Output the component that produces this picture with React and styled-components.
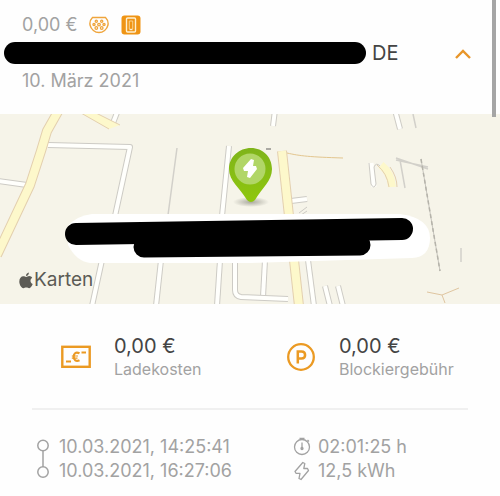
import styled, { createGlobalStyle } from "styled-components";

const TIMES = ["10.03.2021, 14:25:41", "10.03.2021, 16:27:06"];

const App = () => {
  return (
    <>
      <GlobalStyle />
      <Page>
        {/* Session Header */}
        <Header>
          <PriceRow>
            <span>0,00 €</span>
            <PlugIcon />
            <PhoneIcon />
          </PriceRow>
          <TitleRow>
            <Redacted />
            <Country>DE</Country>
            <Toggle type="button" aria-label="Details" aria-expanded="true">
              <ChevronIcon />
            </Toggle>
          </TitleRow>
          <SessionDate>10. März 2021</SessionDate>
        </Header>

        {/* Map */}
        <MapArea>
          <StreetMap />
          <MapBrand>
            <AppleIcon />
            Karten
          </MapBrand>
        </MapArea>

        <Details>
          {/* Costs */}
          <Columns>
            <Cost>
              <CostIcon>
                <MoneyIcon />
              </CostIcon>
              <div>
                <Amount>0,00 €</Amount>
                <CostLabel>Ladekosten</CostLabel>
              </div>
            </Cost>
            <Cost>
              <CostIcon>
                <ParkingIcon />
              </CostIcon>
              <div>
                <Amount>0,00 €</Amount>
                <CostLabel>Blockiergebühr</CostLabel>
              </div>
            </Cost>
          </Columns>

          <Divider />

          {/* Times and Energy */}
          <Stats>
            <Period>
              <PeriodIcon />
              <div>
                {TIMES.map((time) => (
                  <Stat key={time}>{time}</Stat>
                ))}
              </div>
            </Period>
            <div>
              <Stat>
                <TimerIcon />
                02:01:25 h
              </Stat>
              <Stat>
                <BoltIcon />
                12,5 kWh
              </Stat>
            </div>
          </Stats>
        </Details>
        <ScrollThumb />
      </Page>
    </>
  );
};

const PlugIcon = () => (
  <svg width="20" height="18" viewBox="0 0 20 18" fill="none" stroke="#efa53c">
    <path
      d="M3.500 1.500H16.500C18.500 3.500 19.500 6 19 9C18 13.500 14 16.500 10 16.500C6 16.500 2 13.500 1 9C0.500 6 1.500 3.500 3.500 1.500Z"
      strokeWidth="1.400"
    />
    <g strokeWidth="1.300">
      <circle cx="7.300" cy="5.300" r="1.100" />
      <circle cx="12.700" cy="5.300" r="1.100" />
      <circle cx="5" cy="8.600" r="1.100" />
      <circle cx="10" cy="8.600" r="1.300" />
      <circle cx="15" cy="8.600" r="1.100" />
      <circle cx="7.300" cy="12" r="1.300" />
      <circle cx="12.700" cy="12" r="1.300" />
    </g>
  </svg>
);

const PhoneIcon = () => (
  <svg width="20" height="20" viewBox="0 0 20 20" fill="none">
    <rect x="0.500" y="0.500" width="19" height="19" rx="3" fill="#ef9414" />
    <rect x="5.500" y="3" width="9" height="14" rx="1" stroke="#fff0cf" strokeWidth="1.400" />
    <path d="M8.300 14V6H11.700V14" stroke="#fbd18c" strokeWidth="1" />
    <path d="M8.500 14.500H11.500" stroke="#fff0cf" strokeWidth="1.400" />
  </svg>
);

const ChevronIcon = () => (
  <svg width="18" height="12" viewBox="0 0 18 12" fill="none">
    <path d="M2 11L9 4L16 11" stroke="#e8962a" strokeWidth="2.400" />
  </svg>
);

const AppleIcon = () => (
  <svg width="14" height="17" viewBox="0 0 14 17" fill="#5c5b55">
    <path d="M9.900 0.500C10 2.300 8.700 3.900 7 4C6.800 2.300 8.200 0.700 9.900 0.500Z" />
    <path d="M7.100 5C8 5 8.800 4.100 10.200 4.100C11.600 4.200 12.600 4.900 13.200 5.800C10.700 7.300 11.100 10.900 13.700 12C12.900 14 11.700 16.200 10.200 16.200C9.100 16.200 8.700 15.500 7.300 15.500C5.900 15.500 5.400 16.200 4.400 16.200C2.300 16.200 0.300 12.500 0.300 9.500C0.300 6.300 2.200 4.300 4.300 4.300C5.500 4.300 6.400 5 7.100 5Z" />
  </svg>
);

const MoneyIcon = () => (
  <svg width="30" height="24" viewBox="0 0 30 24" fill="none" stroke="#eb9a23">
    <rect x="1.300" y="1.800" width="27.400" height="20" strokeWidth="2.400" />
    <path d="M5 16.500H10M20.500 7.500H25" strokeWidth="2" />
    <path d="M18.500 8.300C14.500 6.300 12.700 9 12.700 11.700C12.700 14.800 15 17 18.500 15.200" strokeWidth="2.200" />
    <path d="M10.800 11H17M10.800 13.200H16.500" strokeWidth="1.200" />
  </svg>
);

const ParkingIcon = () => (
  <svg width="30" height="30" viewBox="0 0 30 30" fill="none" stroke="#eb9a23">
    <circle cx="15" cy="15" r="12.800" strokeWidth="2.300" />
    <path d="M11.800 21.500V9.500H15.500C20.300 9.500 20.300 16.500 15.500 16.500H11.800" strokeWidth="2.500" />
  </svg>
);

const PeriodIcon = () => (
  <svg width="14" height="40" viewBox="0 0 14 40" fill="none" stroke="#a2a2a2" strokeWidth="1.500">
    <circle cx="7" cy="6.500" r="5.200" />
    <circle cx="7" cy="33" r="5.200" />
    <path d="M7 12V28" />
  </svg>
);

const TimerIcon = () => (
  <svg width="18" height="20" viewBox="0 0 18 20" fill="none" stroke="#a2a2a2" strokeWidth="1.300">
    <circle cx="9" cy="10" r="7.500" />
    <path d="M6.500 1.300H11.500M14.500 3L16 4.500M9 5.500V13" />
    <circle cx="9" cy="11.500" r="1" fill="#a2a2a2" />
  </svg>
);

const BoltIcon = () => (
  <svg width="18" height="20" viewBox="0 0 18 20" fill="none" stroke="#a2a2a2" strokeWidth="1.300">
    <path d="M9.800 1.500L2 10.500L3 12.300H7L6 17.500L8 18.500L15.500 9.500L14.500 7.500H10.800L11.800 2.500Z" strokeLinejoin="round" />
  </svg>
);

// A road is its casing with a narrower fill stroked on top
const Road = ({ d, width = 6, fill = "#fffffc", edge = "#cdcbc5" }) => (
  <>
    <path d={d} stroke={edge} strokeWidth={width} />
    <path d={d} stroke={fill} strokeWidth={width - 2} />
  </>
);

const ROADS = [
  "M-2 181L27 185",
  "M118 110L113 123",
  "M48 145L130 147L115 216",
  "M102 260L92 306",
  "M161 260L156 306",
  "M229 146L222 216",
  "M220 260L217 306",
  "M265 260L263 297",
  "M235 260V290Q235 296 241 297L288 299",
  "M275 110L273 126",
  "M395 110L400 129",
  "M291 201L307 199",
  "M308 260L314 306",
  "M325 286L330 306",
  "M338 286L343 306",
];

const MAIN_ROADS = [
  "M60 108L47 131L41 151L30 185L-3 255",
  "M282 151L289 216",
  "M294 260L299 306",
];

const StreetMap = () => (
  <MapDrawing viewBox="0 114 500 190" preserveAspectRatio="xMidYMid slice" aria-hidden="true">
    <defs>
      <linearGradient id="pin" x1="0" y1="0" x2="0" y2="1">
        <stop offset="0" stopColor="#7fb41b" />
        <stop offset="1" stopColor="#8fc70d" />
      </linearGradient>
      <radialGradient id="shadow">
        <stop offset="0" stopColor="#77776d" stopOpacity="0.600" />
        <stop offset="1" stopColor="#77776d" stopOpacity="0" />
      </radialGradient>
    </defs>
    <rect y="114" width="500" height="190" fill="#f6f4e9" />

    {/* Streets */}
    <g fill="none" strokeLinejoin="round">
      {ROADS.map((d) => (
        <Road key={d} d={d} />
      ))}
      {MAIN_ROADS.map((d) => (
        <Road key={d} d={d} width={10} fill="#fdf8cb" edge="#e3cfae" />
      ))}
      <path d="M81 113L109 129L120 125L96 113Z" fill="#fdf8cb" />
      <path d="M81 113L109 129M96 113L120 125" stroke="#e3cfae" />
      <path d="M287 153C300 156 310 157 343 158" stroke="#e3c68f" />
      <path d="M177 148L168 215M413 114L416 128M461 248V262" stroke="#d2d0ca" strokeWidth="1.500" />
      <path d="M371 163L374 187" stroke="#fffffc" strokeWidth="5" />
      <path d="M369 163L371 184Q374 190 376 184L374 167Q376 162 380 166" stroke="#cdcbc5" />
      <path d="M381 165Q391 173 392 187" stroke="#fdf8cb" strokeWidth="8" />
      <path d="M377 165Q387 173 389 187M390 167Q397 177 397 187" stroke="#e3cfae" />
      <path d="M396 158L428 169M396 160L428 167M400 160L405 188" stroke="#d2d0ca" strokeWidth="1.500" />
      <path d="M421 159L440 271" stroke="#c6c4bd" />
      <path d="M421 159L440 271" stroke="#b5b3aa" strokeDasharray="4 3" strokeWidth="1.500" />
      <path d="M299 213L307 207M301 215L307 211" stroke="#cdcbc5" />
      <path d="M427 292L442 295L459 288M442 295L445 303" stroke="#dfc5a0" />
      <path d="M266 149H271" stroke="#92918b" strokeWidth="1.500" />
    </g>

    {/* Station pin */}
    <ellipse cx="251" cy="202" rx="18" ry="5" fill="url(#shadow)" />
    <path
      d="M251 148C263 148 272 157 272 169C272 181 262 188 255 200Q251 204 247 200C240 188 229 181 229 169C229 157 239 148 251 148Z"
      fill="url(#pin)"
    />
    <circle cx="250" cy="169" r="15.500" fill="#b1d667" />
    <path d="M251 159L243 168L244 171H248L247 177L250 178L257 169L256 166H253L254 160Z" fill="#fff" />

    {/* Covered address */}
    <path d="M92 214H400Q430 218 430 238Q430 257 412 258L250 263H90Q76 261 68 245V226Q76 216 92 214Z" fill="#fff" />
    <g stroke="#000" strokeLinecap="round">
      <path d="M76 234L402 229" strokeWidth="22" />
      <path d="M144 247L360 245" strokeWidth="21" />
    </g>
  </MapDrawing>
);

const GlobalStyle = createGlobalStyle`
  * {
    box-sizing: border-box;
  }

  body {
    margin: 0;
    background: #fefefe;
    font-family: Inter, "Liberation Sans", sans-serif;
  }
`;

const Page = styled.main`
  position: relative;
  color: #a2a2a2;
`;

const Header = styled.header`
  padding: 11px 0 19px;
  font-size: 18px;
  line-height: 28px;
`;

const PriceRow = styled.div`
  display: flex;
  align-items: center;
  gap: 12px;
  padding-left: 22px;
`;

const TitleRow = styled.div`
  display: flex;
  align-items: center;
  height: 28px;
  padding: 0 24px 0 4px;
`;

const Redacted = styled.div`
  flex: 0 1 362px;
  height: 22px;
  border-radius: 12px;
  background: #000;
`;

const Country = styled.span`
  margin-left: 6px;
  color: #444;
  font-size: 20px;
`;

const Toggle = styled.button`
  display: flex;
  align-items: center;
  justify-content: center;
  margin-left: auto;
  padding: 4px;
  border: 0;
  background: none;
  cursor: pointer;
`;

const SessionDate = styled.div`
  padding-left: 22px;
`;

const MapArea = styled.section`
  position: relative;
`;

const MapDrawing = styled.svg`
  display: block;
  width: 100%;
  height: 190px;
`;

const MapBrand = styled.div`
  position: absolute;
  left: 19px;
  bottom: 12px;
  display: flex;
  align-items: center;
  gap: 1px;
  color: #5c5b55;
  font-size: 19px;
  line-height: 24px;
`;

const Details = styled.section`
  padding: 30px 32px 14px;
`;

const Columns = styled.div`
  display: grid;
  grid-template-columns: 225px 1fr;
  padding-left: 29px;
`;

const Cost = styled.div`
  display: flex;
  align-items: center;
  gap: 23px;
`;

const CostIcon = styled.div`
  display: flex;
  width: 30px;
`;

const Amount = styled.div`
  color: #444;
  font-size: 20px;
  line-height: 24px;
`;

const CostLabel = styled.div`
  font-size: 16px;
  line-height: 22px;
`;

const Divider = styled.hr`
  margin: 28px 0 25px;
  border: 0;
  border-top: 2px solid #f0f0f0;
`;

const Stats = styled.div`
  display: grid;
  grid-template-columns: 257px 1fr;
  padding-left: 4px;
`;

const Period = styled.div`
  display: flex;
  align-items: center;
  gap: 9px;
`;

const Stat = styled.div`
  display: flex;
  align-items: center;
  gap: 7px;
  font-size: 18px;
  line-height: 24px;
  white-space: nowrap;
`;

const ScrollThumb = styled.div`
  position: absolute;
  top: 0;
  right: 4px;
  width: 4px;
  height: 117px;
  background: #a5a5a5;
`;

export default App;
